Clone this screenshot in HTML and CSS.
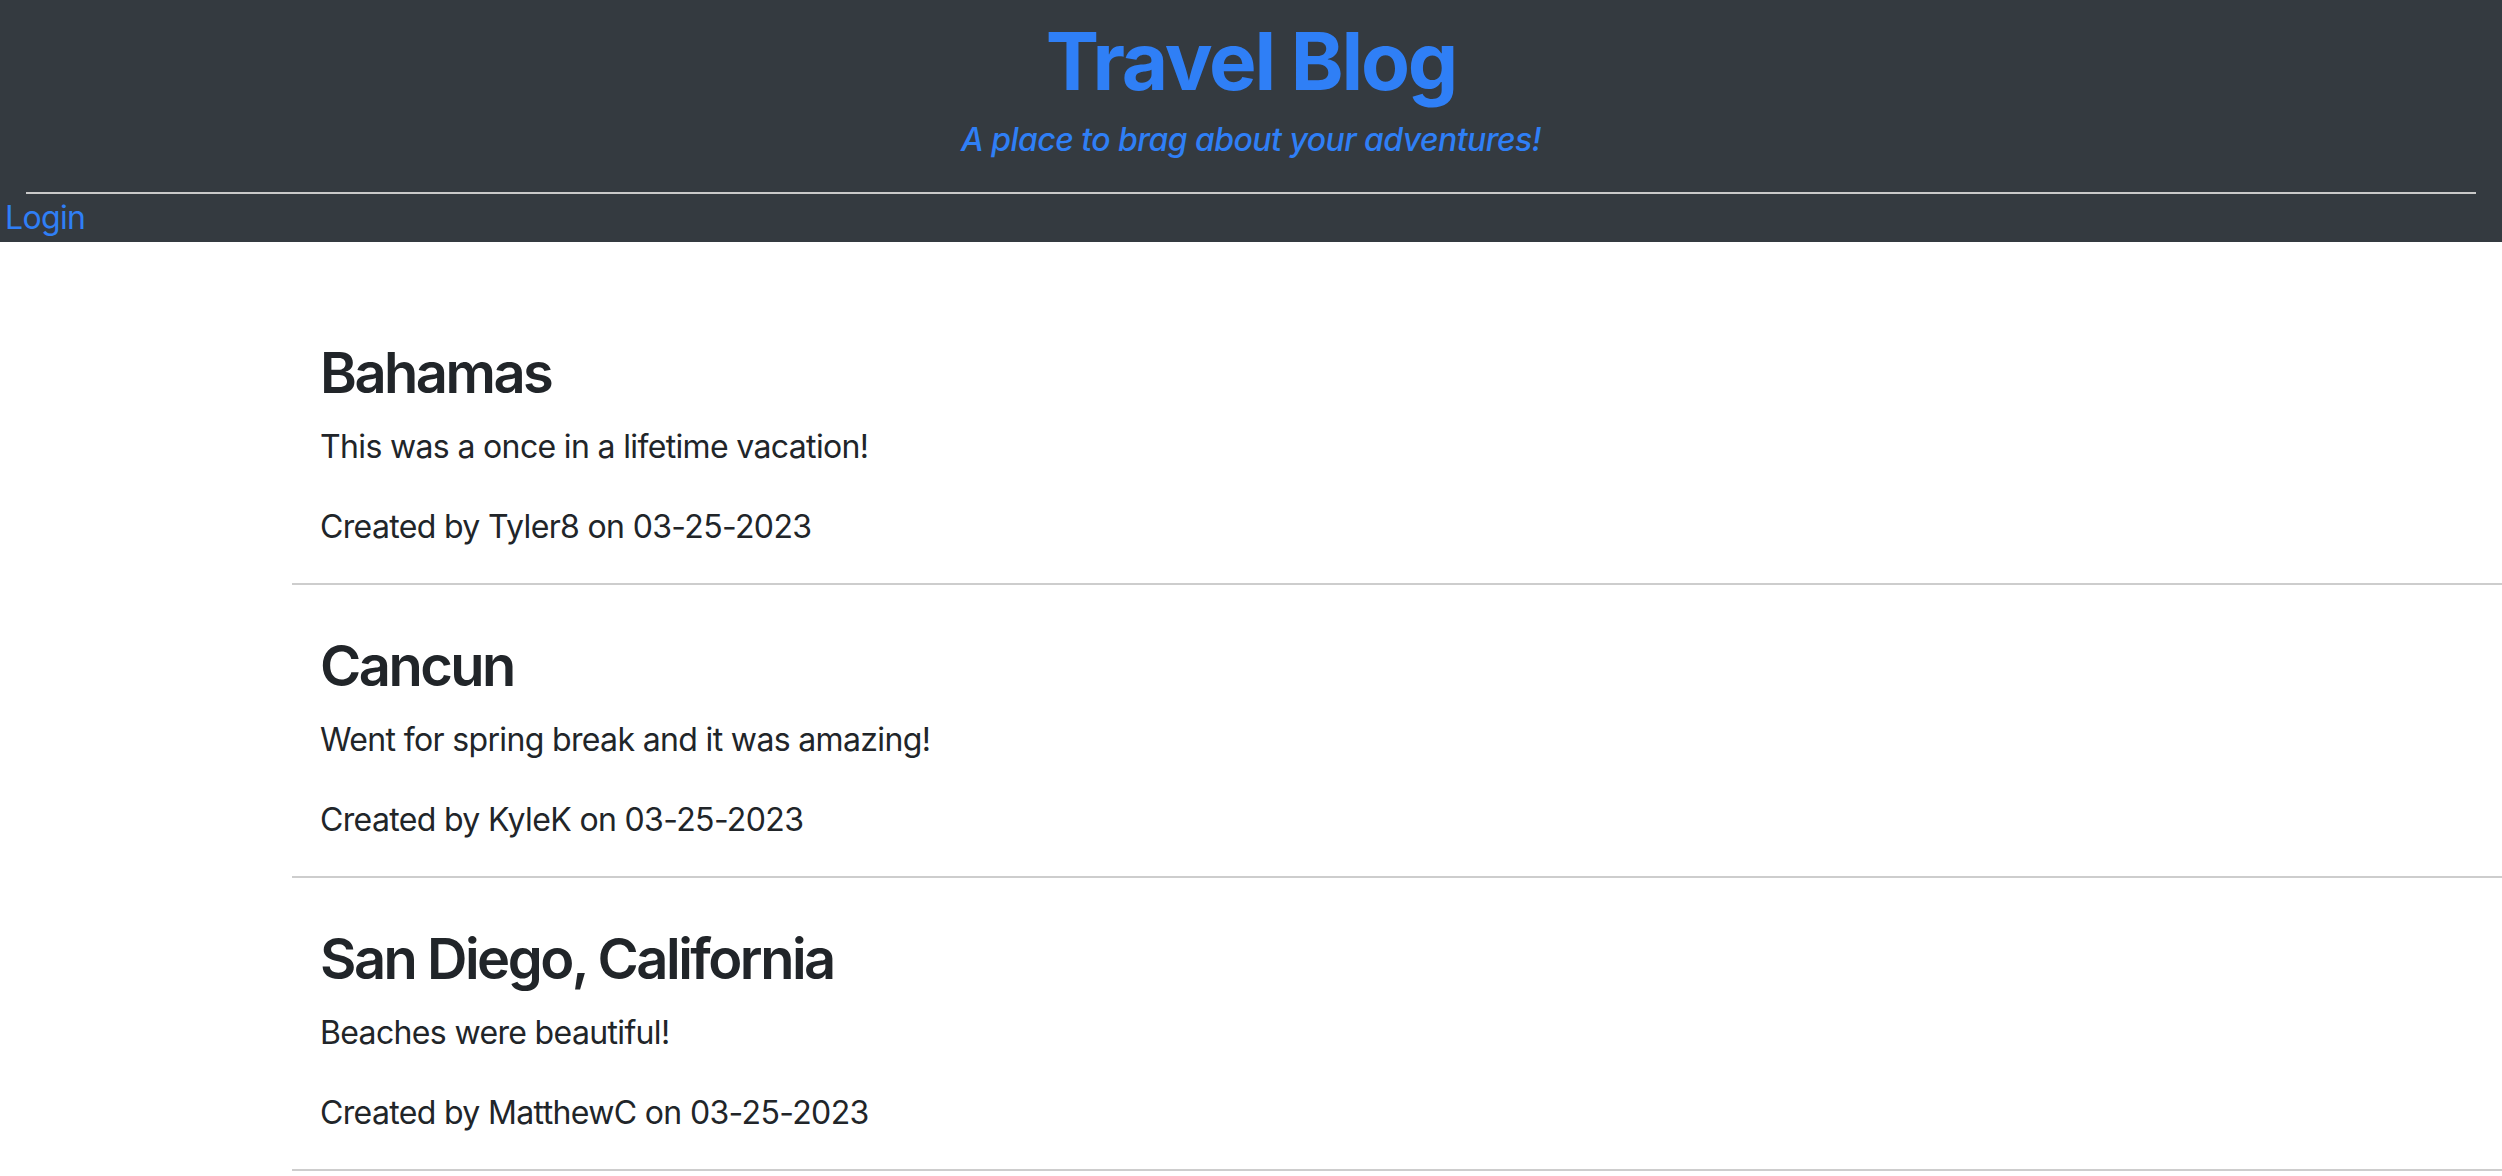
FILE: index.html
```html
<!DOCTYPE html>
<html lang="en">
<head>
<meta charset="utf-8">
<title>Travel Blog</title>
<link rel="stylesheet" href="styles.css">
</head>
<body>
<header class="site-header">
  <h1 class="site-title">Travel Blog</h1>
  <p class="site-tagline">A place to brag about your adventures!</p>
  <hr class="header-rule">
  <nav class="site-nav"><a href="#" class="nav-link">Login</a></nav>
</header>
<main class="posts">
  <article class="post">
    <h3 class="post-title">Bahamas</h3>
    <p class="post-text">This was a once in a lifetime vacation!</p>
    <p class="post-meta">Created by Tyler8 on 03-25-2023</p>
  </article>
  <article class="post">
    <h3 class="post-title">Cancun</h3>
    <p class="post-text">Went for spring break and it was amazing!</p>
    <p class="post-meta">Created by KyleK on 03-25-2023</p>
  </article>
  <article class="post">
    <h3 class="post-title">San Diego, California</h3>
    <p class="post-text">Beaches were beautiful!</p>
    <p class="post-meta">Created by MatthewC on 03-25-2023</p>
  </article>
</main>
</body>
</html>
```
FILE: styles.css
```css
html, body {
  margin: 0;
  padding: 0;
}
body {
  font-family: Inter, "Noto Sans", "Liberation Sans", sans-serif;
  font-size: 32px;
  line-height: 48px;
  letter-spacing: -0.65px;
  color: #212529;
  background: #ffffff;
}
.site-header {
  background: #343a40;
  padding-top: 13px;
  display: flex;
  flex-direction: column;
}
.site-title {
  margin: 0 0 7px;
  text-align: center;
  font-size: 80px;
  line-height: 96px;
  font-weight: 700;
  color: #2f7ff6;
  letter-spacing: -2.2px;
}
.site-tagline {
  margin: 0;
  text-align: center;
  font-style: italic;
  font-weight: 500;
  color: #2f7ff6;
  letter-spacing: -0.55px;
}
.header-rule {
  margin: 28px 26px 0;
  border: 0;
  border-top: 2px solid #c9c9c9;
  height: 0;
}
.site-nav {
  padding-left: 5px;
}
.nav-link {
  color: #2f7ff6;
  text-decoration: none;
}
.posts {
  padding: 50px 0 0 292px;
}
.post {
  padding: 48px 28px 0;
  border-bottom: 2px solid #cdcdcd;
}
.post-title {
  margin: 0 0 16px;
  font-size: 56px;
  line-height: 67px;
  font-weight: 600;
  letter-spacing: -2.5px;
}
.post-text, .post-meta {
  margin: 0 0 32px;
}
```
